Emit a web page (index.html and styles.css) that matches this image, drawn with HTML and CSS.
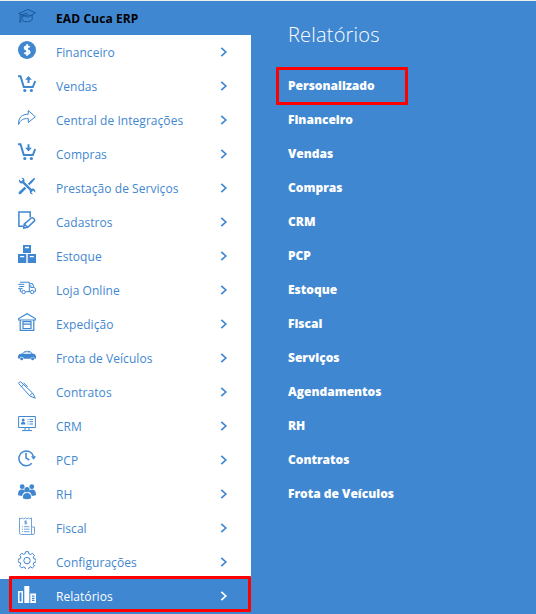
FILE: index.html
```html
<!DOCTYPE html>
<html lang="pt-BR">
<head>
  <meta charset="UTF-8" />
  <meta name="viewport" content="width=device-width, initial-scale=1.0"/>
  <title>EAD Cuca ERP - Relatórios</title>
  <link rel="stylesheet" href="styles.css">
</head>
<body>
  <svg class="defs" width="0" height="0">
    <symbol id="seta" viewBox="0 0 8 10"><path d="M1.3 .8L5.8 5 1.3 9.2" fill="none" stroke="currentColor" stroke-width="1.7"/></symbol>
  </svg>
  <div class="app">
    <nav class="menu">
      <a class="item topo">
        <svg class="icone" viewBox="0 0 18 18"><path d="M.7 6.5L10 2.5l7.3 3.3-7.6 4.4zM4 8.5v4.7c3 2.3 8 2 10.2-.6V7.8M4 10c3-2.3 7-2.3 10-.8M9.7 6.2L2.2 8v5.2M1.3 15.5l.9-2.5.7 2.5" class="traco"/></svg>
        <span>EAD Cuca ERP</span>
      </a>
      <a class="item">
        <svg class="icone" viewBox="0 0 18 18"><circle cx="9" cy="9" r="9" class="cheio"/><path d="M11.6 6.3C10.6 5 6.7 4.8 6.7 7c0 2.4 4.9 1.4 4.9 4 0 2.1-3.9 2.3-5.2.7M9.1 3.2v11.6" class="traco vazado cifrao"/></svg>
        <span>Financeiro</span><svg class="seta"><use href="#seta"/></svg>
      </a>
      <a class="item">
        <svg class="icone" viewBox="0 0 18 18"><path d="M0 1.2h2.5L5.8 12h9L17.2 6" class="traco grosso"/><path d="M10.5 1l3.3 3.7h-2.3V8h-2V4.7H7.2z" class="cheio"/><circle cx="6.8" cy="15.5" r="1.6" class="cheio"/><circle cx="13.4" cy="15.5" r="1.6" class="cheio"/></svg>
        <span>Vendas</span><svg class="seta"><use href="#seta"/></svg>
      </a>
      <a class="item">
        <svg class="icone" viewBox="0 0 18 18"><path d="M.6 15.5C.2 8.5 4 5.2 10.3 5.2V1.5l7 6.3-7 5.7V9.6C5.4 9.3 2.4 11 .6 15.5z" class="traco"/></svg>
        <span>Central de Integrações</span><svg class="seta"><use href="#seta"/></svg>
      </a>
      <a class="item">
        <svg class="icone" viewBox="0 0 18 18"><path d="M0 1.2h2.5L5.8 12h9L17.2 6" class="traco grosso"/><path d="M10.5 8.5L7.2 4.8h2.3V1.2h2v3.6h2.3z" class="cheio"/><circle cx="6.8" cy="15.5" r="1.6" class="cheio"/><circle cx="13.4" cy="15.5" r="1.6" class="cheio"/></svg>
        <span>Compras</span><svg class="seta"><use href="#seta"/></svg>
      </a>
      <a class="item">
        <svg class="icone" viewBox="0 0 18 18"><path d="M4 4.2l9.8 9.6" class="traco extra"/><path d="M1 2.2l2.2 2.2L5 2.8 3.3.8C5.8.4 7.3 2.4 6.3 4.7L4.7 6.3C2.3 7.1.3 4.8 1 2.2zM17.3 15.8l-2.2-2.2-1.8 1.8 1.8 1.9c-2.5.5-4-1.7-3.2-4l1.7-1.6c2.3-.8 4.3 1.4 3.7 4.1z" class="cheio"/><path d="M16.3.8l1 1-3.1 3.8-2.8 2.6-1.5-1.5 2.6-2.8zM6.5 9.8l1.8 1.8-5.3 5.1c-1.5 1.4-3.3-.4-1.9-1.9z" class="cheio"/></svg>
        <span>Prestação de Serviços</span><svg class="seta"><use href="#seta"/></svg>
      </a>
      <a class="item">
        <svg class="icone" viewBox="0 0 18 18"><path d="M12.2 6.5V.9H.9v14.3h4.3" class="traco medio"/><path d="M6.2 13.1l7.1-6.1q1-.7 1.8 0l1.2 1.3q.8.9-.1 1.8L9.7 16.2l-4 .9zM6.2 13.1l3.5 3.1" class="traco medio"/></svg>
        <span>Cadastros</span><svg class="seta"><use href="#seta"/></svg>
      </a>
      <a class="item">
        <svg class="icone" viewBox="0 0 18 18"><path d="M5 0h8v8H5zM0 9h8.3v9H0zM9.7 9H18v9H9.7z" class="cheio"/><path d="M7 2.5h4M2.2 11.7h4M11.8 11.7h4" class="traco vazado"/></svg>
        <span>Estoque</span><svg class="seta"><use href="#seta"/></svg>
      </a>
      <a class="item">
        <svg class="icone" viewBox="0 0 18 18"><path d="M2 3.2h9.3v9.5H7.6M.2 5.3h6M1.2 7.5h5M.2 9.7h4.5M2.3 9.7v3h1.3M11.3 4.6h3.2l1.3 3.8 1.6 1v3.3h-1.2M12.8 6v2.5h3M11.2 12.7h1.2" class="traco"/><circle cx="5.6" cy="13" r="1.7" class="traco"/><circle cx="14.2" cy="13" r="1.7" class="traco"/></svg>
        <span>Loja Online</span><svg class="seta"><use href="#seta"/></svg>
      </a>
      <a class="item">
        <svg class="icone" viewBox="0 0 18 18"><path d="M.7 7V5.5L9 .7l8.3 4.8V7zM2.2 7v10.4h13.6V7M5 15.5V8.7h8v6.8zM5 11.2h8" class="traco expedicao"/></svg>
        <span>Expedição</span><svg class="seta"><use href="#seta"/></svg>
      </a>
      <a class="item">
        <svg class="icone" viewBox="0 0 18 18"><path d="M0 9.2l1-2 3.2-.8c2-2 3.2-2.6 5.5-2.6s3.3.8 4.8 2.7l2.5.8 1 2v2.3l-1.4.4a2 2 0 0 0-4-.2H5.7a2 2 0 0 0-4 0L0 11.2z" class="cheio"/><path d="M5.4 6.2h7.8M9 4.6v2" class="traco vazado"/><circle cx="3.7" cy="11.8" r="1.5" class="cheio"/><circle cx="14.6" cy="11.8" r="1.5" class="cheio"/></svg>
        <span>Frota de Veículos</span><svg class="seta"><use href="#seta"/></svg>
      </a>
      <a class="item">
        <svg class="icone" viewBox="0 0 18 18"><path d="M.7 2.5Q.8.7 2.7.9L14.6 12l2.7 5.2-5.5-2.3zM5.6 3.5L2.9 6.1M11.9 14.5l2.4-2.5M5.5 1.7l4.2 4.2" class="traco"/></svg>
        <span>Contratos</span><svg class="seta"><use href="#seta"/></svg>
      </a>
      <a class="item">
        <svg class="icone" viewBox="0 0 18 18"><path d="M.6 1.5h16.8v11H.6zM7 12.5V15M11 12.5V15M4 15.6h10M9.5 4.4h1M11.5 4.4h3.5M9.5 6.7h1M11.5 6.7h3.5M9.5 9h1M11.5 9h3.5" class="traco"/><circle cx="5.2" cy="5" r="1.5" class="cheio"/><path d="M3 9.5q0-2.8 2.2-2.8t2.2 2.8z" class="cheio"/></svg>
        <span>CRM</span><svg class="seta"><use href="#seta"/></svg>
      </a>
      <a class="item">
        <svg class="icone" viewBox="0 0 18 18"><path d="M13.8 14.3A7.4 7.4 0 1 1 15.5 7.5M8 3.7v5.2l3.3 2.1" class="traco medio"/><path d="M13 7.2h5l-2.3 3.6z" class="cheio"/></svg>
        <span>PCP</span><svg class="seta"><use href="#seta"/></svg>
      </a>
      <a class="item">
        <svg class="icone" viewBox="0 0 18 18"><circle cx="4.2" cy="3.7" r="2.4" class="cheio"/><circle cx="13.8" cy="3.7" r="2.4" class="cheio"/><path d="M0 12.3c0-4 1.3-5.7 4-5.7s3 1 3 2-2.7 1.5-2.8 4.5zM18 12.3c0-4-1.3-5.7-4-5.7s-3 1-3 2 2.7 1.5 2.8 4.5z" class="cheio"/><circle cx="9" cy="6.7" r="2.6" class="cheio"/><path d="M4.8 15.2c0-3.6 1.4-5.2 4.2-5.2s4.2 1.6 4.2 5.2q-4.2 2-8.4 0z" class="cheio"/></svg>
        <span>RH</span><svg class="seta"><use href="#seta"/></svg>
      </a>
      <a class="item">
        <svg class="icone fino" viewBox="0 0 18 18"><path d="M1.5 1l1.4.8L4.4 1l1.4.8L7.3 1l1.5.8 1.4-.8 1.5.8 1.8-.8v15.8q0 .7 1.5.7H3.4q-1.9 0-1.9-2zM13.5 10h3v5.8q0 1.7-1.5 1.7M4 9.7h1M6 9.7h5.5M4 12.2h1M6 12.2h5.5M4 14.7h1M6 14.7h5.5M8.7 4.1H6.8v1.3h1.9v1.4H6.6M7.7 3.4v4" class="traco"/></svg>
        <span>Fiscal</span><svg class="seta"><use href="#seta"/></svg>
      </a>
      <a class="item">
        <svg class="icone" viewBox="0 0 18 18"><path d="M7.5.7h3l.4 2.1 1.7.7 1.8-1.2 2.1 2.1-1.2 1.8.6 1.6 2.1.4v2.9l-2.1.4-.7 1.7 1.2 1.8-2.1 2-1.8-1.1-1.6.7-.4 2H7.6l-.4-2-1.7-.7-1.8 1.1-2.1-2.1 1.2-1.7-.6-1.7-2-.4V8.2l2-.4.7-1.7-1.2-1.8 2.1-2 1.7 1.1 1.6-.6z" class="traco"/><circle cx="9" cy="9.6" r="3.2" class="traco"/></svg>
        <span>Configurações</span><svg class="seta"><use href="#seta"/></svg>
      </a>
      <a class="item ativo">
        <svg class="icone" viewBox="0 0 18 18"><path d="M.8 5.7h3.4v10.6H.8z" class="traco medio"/><path d="M6.3 0h5v17h-5zM12.3 7.4H18V17h-5.7z" class="cheio"/><path d="M14 10.2h2.5M14 12.3h2.5M14 14.4h2.5" class="traco vazado"/></svg>
        <span>Relatórios</span><svg class="seta"><use href="#seta"/></svg>
      </a>
    </nav>
    <section class="painel">
      <h1>Relatórios</h1>
      <ul class="relatorios">
        <li class="destaque">Personalizado</li>
        <li>Financeiro</li>
        <li>Vendas</li>
        <li>Compras</li>
        <li>CRM</li>
        <li>PCP</li>
        <li>Estoque</li>
        <li>Fiscal</li>
        <li>Serviços</li>
        <li>Agendamentos</li>
        <li>RH</li>
        <li>Contratos</li>
        <li>Frota de Veículos</li>
      </ul>
    </section>
  </div>
</body>
</html>
```
FILE: styles.css
```css
*,*::after{box-sizing:border-box;}
body{margin:0;font-family:"Open Sans",sans-serif;font-size:12px;font-variant-ligatures:none;background:#3f87d1;overflow:hidden;}
.defs{position:absolute;}
.app{display:flex;height:614px;border-top:1px solid #eee;}

/* Menu lateral */
.menu{width:251px;background:#fff;color:#3f87d1;--fundo:#fff;}
.item{display:flex;align-items:center;height:34px;padding:0 23px 0 18px;letter-spacing:.05px;}
.item span{flex:1;margin-left:20px;white-space:nowrap;}
.icone{width:18px;height:18px;margin-bottom:4px;flex:none;}
.seta{width:8px;height:10px;margin-bottom:1px;}
.topo{background:#3f87d1;color:#000;font-weight:700;letter-spacing:.1px;}
.topo .icone{color:#19589d;}
.ativo{position:relative;height:35px;background:#3f87d1;color:#fff;--fundo:#3f87d1;}
.ativo::after{content:"";position:absolute;left:9px;top:-3px;width:242px;height:36px;border:3px solid #f00;border-radius:1px;}

.traco{fill:none;stroke:currentColor;stroke-width:1;}
.medio{stroke-width:1.5;}
.grosso{stroke-width:2;}
.extra{stroke-width:2.4;}
.vazado{stroke:var(--fundo);stroke-width:1.3;}
.cifrao{stroke-width:1.9;}
.expedicao{stroke-width:1.2;}
.cheio{fill:currentColor;}
.fino{opacity:.75;}

/* Painel de relatórios */
.painel{flex:1;padding:18px 0 0 37px;color:#fff;}
h1{margin:0;height:50px;line-height:32px;font-size:20px;font-weight:300;letter-spacing:.2px;}
.relatorios{margin:0;padding:0;list-style:none;}
.relatorios li{height:34px;line-height:34px;font-weight:800;letter-spacing:0;}
.destaque{position:relative;}
.destaque::after{content:"";position:absolute;left:-12px;top:-2px;width:132px;height:38px;border:3px solid #f00;border-radius:1px;}
```
